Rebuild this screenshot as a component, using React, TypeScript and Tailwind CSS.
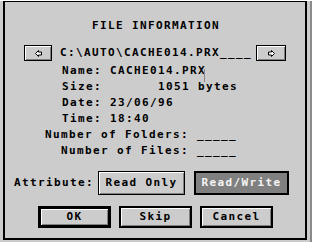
import React from 'react';

const font = "font-['DejaVu_Sans_Mono','Liberation_Mono',monospace] font-bold text-[11px] leading-[16px] tracking-[1.38px]";

const bevel = 'bg-[#cccccc] shadow-[inset_1px_1px_0_#ffffff,inset_-1px_-1px_0_#808080]';

const Arrow: React.FC<{ dir: 'left' | 'right' }> = ({ dir }) => (
  <svg width="7" height="7" viewBox="0 0 7 7" className={dir === 'right' ? 'scale-x-[-1]' : ''}>
    <polygon
      points="0.5,3.5 3.5,0.5 3.5,2 6.5,2 6.5,5 3.5,5 3.5,6.5"
      fill="#ffffff"
      stroke="#000000"
      strokeWidth="1"
    />
  </svg>
);

const InfoRow: React.FC<{ label: string; value: string }> = ({ label, value }) => (
  <div className="flex pl-[57px] whitespace-pre">
    <span>{label}</span>
    <span>{value}</span>
  </div>
);

const CountRow: React.FC<{ label: string }> = ({ label }) => (
  <div className="flex pl-[40px] whitespace-pre">
    <span className="w-[152px] text-right">{label}</span>
    <span>_____</span>
  </div>
);

export default function App() {
  return (
    <div className="w-[312px] h-[242px] bg-[#cccccc] border-r-2 border-b border-[#8a8a8a]">
      <div className={`ml-[3px] mt-[1px] w-[304px] h-[239px] border-2 border-t border-black bg-[#cccccc] text-black flex flex-col ${font}`}>
        <div className="mt-[16px] text-center pl-[2px]">FILE INFORMATION</div>

        <div className="mt-[11px] flex items-center justify-center">
          <button className={`w-[28px] h-[16px] border border-black flex items-center justify-center ${bevel}`}>
            <Arrow dir="left" />
          </button>
          <span className="ml-[8px] w-[192px]">C:\AUTO\CACHE014.PRX____</span>
          <button className={`ml-[4px] w-[30px] h-[16px] border border-black flex items-center justify-center ${bevel}`}>
            <Arrow dir="right" />
          </button>
        </div>

        <div className="mt-[2px] relative">
          <InfoRow label="Name: " value="CACHE014.PRX" />
          <div className="absolute left-[199px] top-[6px] w-px h-[13px] bg-[#888888]" />
          <InfoRow label="Size:       " value="1051 bytes" />
          <InfoRow label="Date: " value="23/06/96" />
          <InfoRow label="Time: " value="18:40" />
          <CountRow label="Number of Folders: " />
          <CountRow label="Number of Files: " />
        </div>

        <div className="mt-[12px] flex items-center pl-[9px]">
          <span className="w-[84px]">Attribute:</span>
          <button className={`w-[87px] h-[24px] border border-black flex items-center justify-center ${bevel}`}>
            Read Only
          </button>
          <button className="ml-[9px] w-[95px] h-[24px] border-2 border-black bg-[#808080] text-[#f4f4f4] flex items-center justify-center">
            Read/Write
          </button>
        </div>

        <div className="mt-[11px] flex justify-center gap-[8px] pl-[1px]">
          <button className={`w-[73px] h-[22px] border-[3px] border-black flex items-center justify-center ${bevel}`}>
            OK
          </button>
          <button className={`w-[73px] h-[22px] border-2 border-black flex items-center justify-center ${bevel}`}>
            Skip
          </button>
          <button className={`w-[73px] h-[22px] border-2 border-black flex items-center justify-center ${bevel}`}>
            Cancel
          </button>
        </div>
      </div>
    </div>
  );
}
